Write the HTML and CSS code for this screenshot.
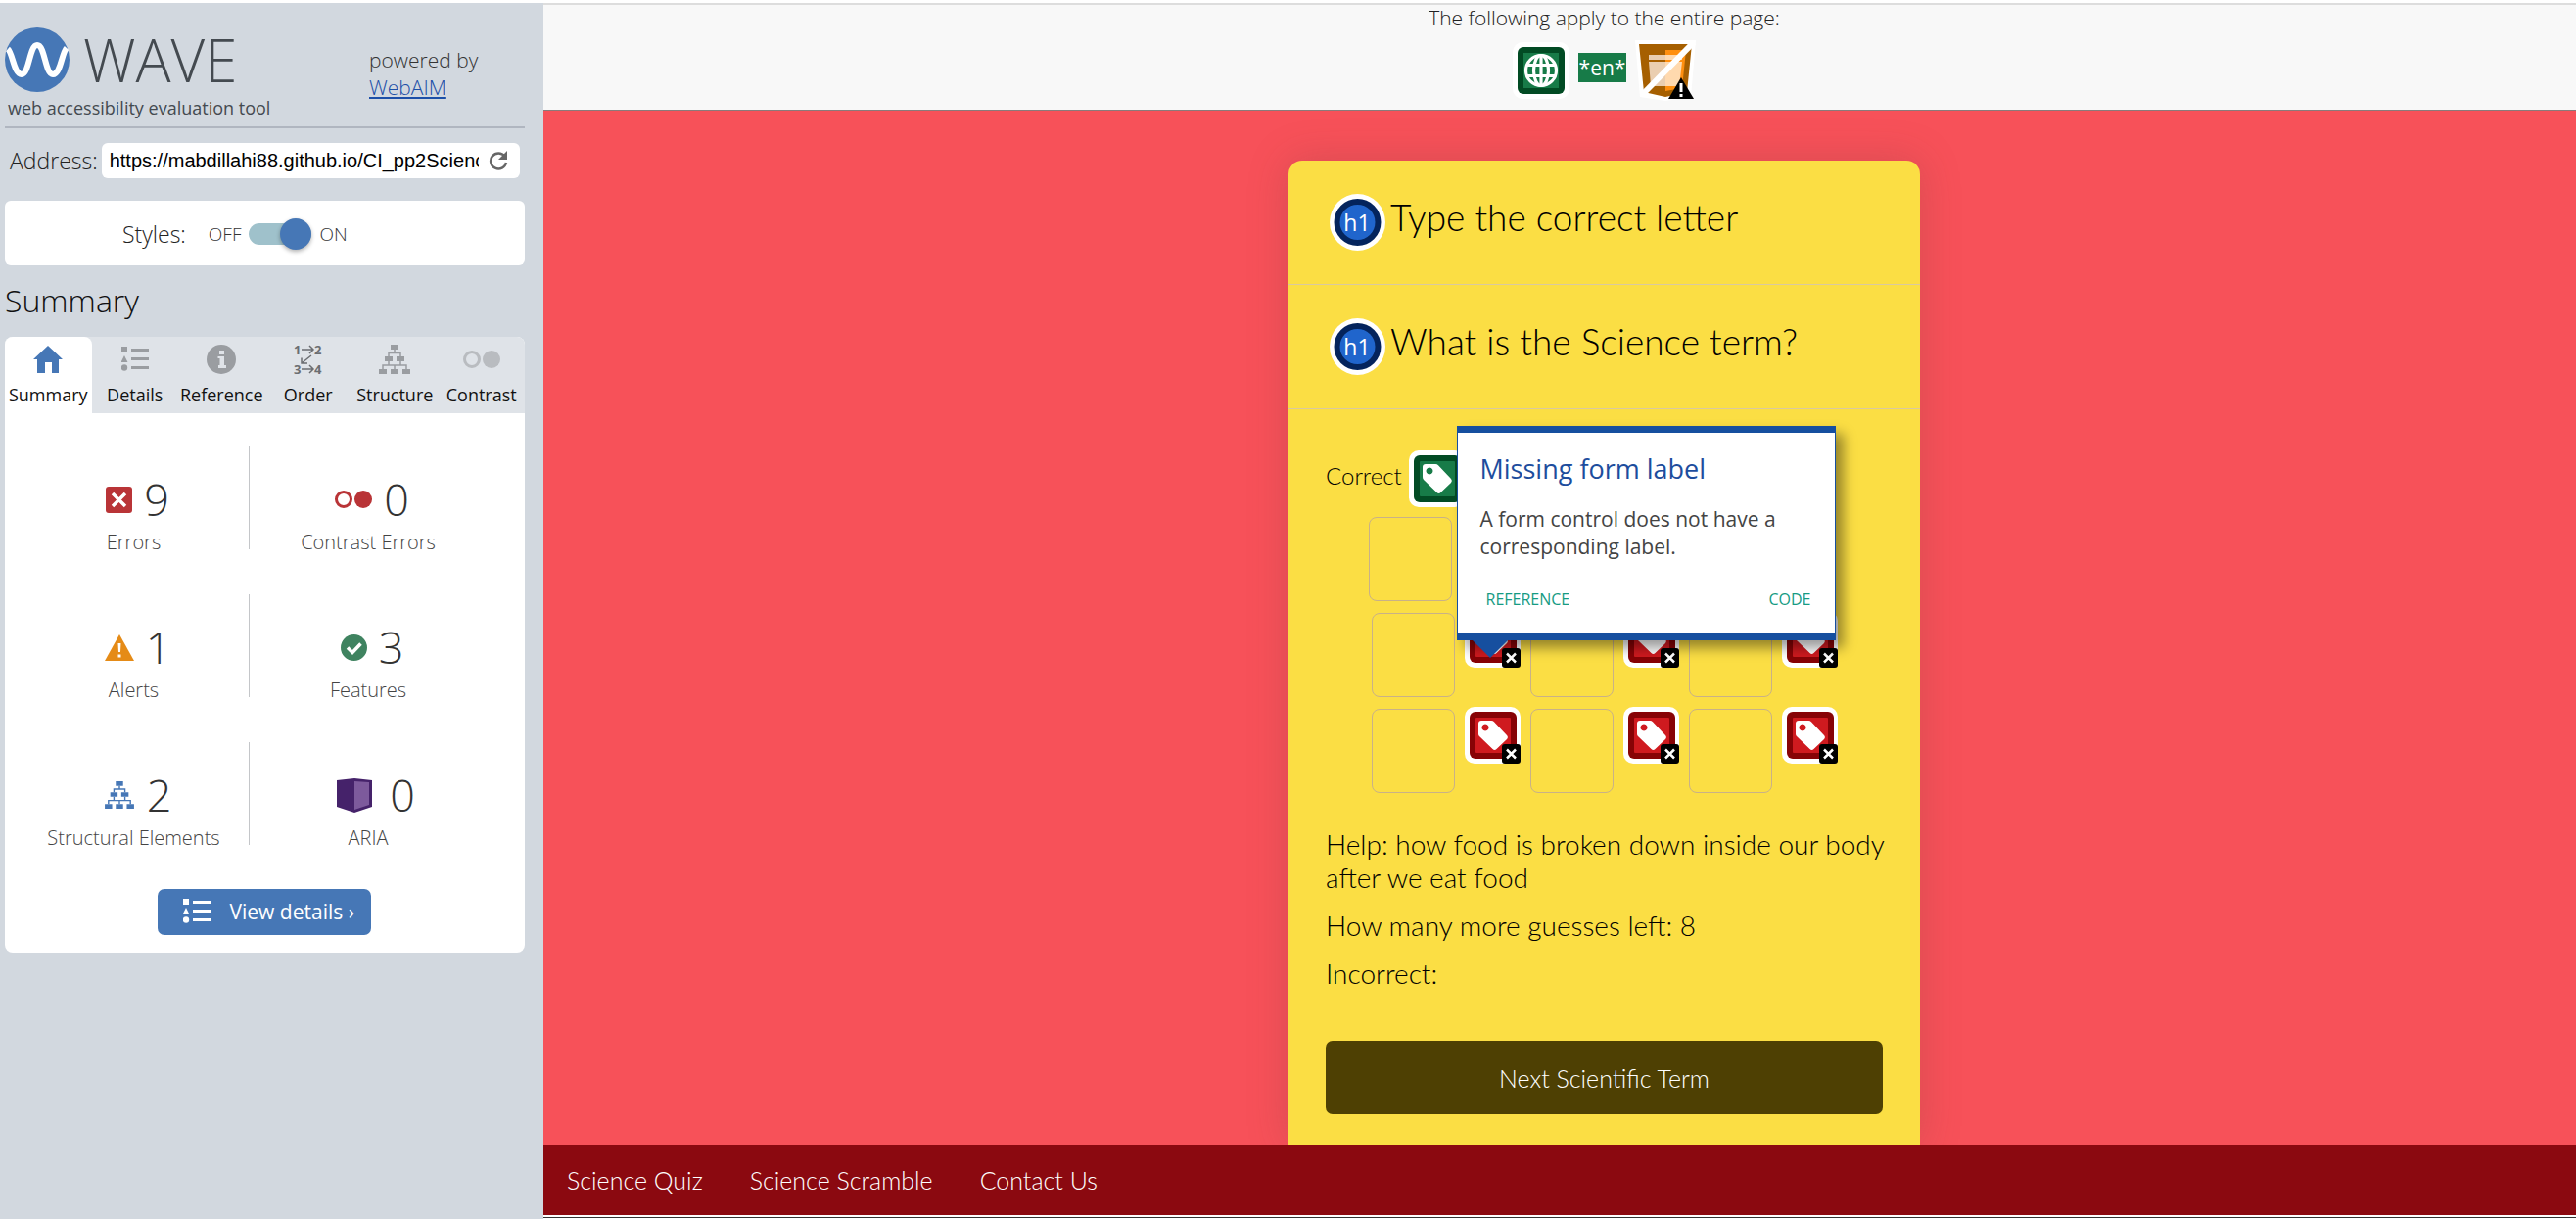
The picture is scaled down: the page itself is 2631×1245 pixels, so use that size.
FILE: index.html
```html
<!DOCTYPE html>
<html lang="en">
<head>
<meta charset="utf-8">
<title>WAVE Web Accessibility Evaluation Tool</title>
<link rel="stylesheet" href="styles.css">
</head>
<body>
<svg class="sprite" aria-hidden="true">
  <symbol id="list" viewBox="0 0 28 26">
    <path d="M0 0h6v6H0zM3 9l3.500 7h-7zM10 2h18v3H10zM10 11h18v3H10zM10 20h18v3H10z"/><circle cx="3" cy="21.500" r="3.200"/>
  </symbol>
  <symbol id="tree" viewBox="0 0 32 30">
    <path d="M12 0h8v5h-8zM6 12h8v5H6zM18 12h8v5h-8zM0 25h8v5H0zM12 25h8v5h-8zM24 25h8v5h-8z"/>
    <path d="M16 5v3.500M10 12V8.500h12V12M10 17v4M22 17v4M4 25v-4h24v4M16 21v4" fill="none" stroke="currentColor" stroke-width="1.500"/>
  </symbol>
  <symbol id="pair" viewBox="0 0 38 20">
    <circle cx="9" cy="10" r="7.500" fill="none" stroke="currentColor" stroke-width="3"/><circle cx="29" cy="10" r="9"/>
  </symbol>
  <symbol id="tag" viewBox="0 0 57 58">
    <rect class="halo" width="57" height="58" rx="10"/>
    <rect class="frame" x="5" y="5" width="48" height="48" rx="6"/>
    <rect class="face" x="11" y="11" width="36" height="36" rx="1"/>
    <path fill="#fff" fill-rule="evenodd" d="M14 17a3 3 0 0 1 3-3h10a4 4 0 0 1 3 1.200L43 29a3 3 0 0 1 0 4L32.500 43a3 3 0 0 1-4 0L15 30a4 4 0 0 1-1-3zM21 17.500a3.500 3.500 0 1 0 .01 0z"/>
  </symbol>
  <symbol id="missing" viewBox="0 0 57 58">
    <use href="#tag"/>
    <rect x="38" y="38" width="19" height="20" rx="3"/>
    <path d="M43 43.500l9 9M52 43.500l-9 9" stroke="#fff" stroke-width="2.500"/>
  </symbol>
  <symbol id="h1" viewBox="0 0 57 58">
    <ellipse cx="28.500" cy="29" rx="28.500" ry="29" fill="#fff"/><circle cx="28.500" cy="29" r="24" fill="#04245c"/><circle cx="28.500" cy="29" r="18" fill="#2065cc"/>
    <text x="28" y="38" text-anchor="middle" font-family="Open Sans" font-size="23" font-weight="400" fill="#fff">h1</text>
  </symbol>
</svg>

<aside class="sidebar">
  <header class="brand">
    <div>
      <div class="logo">
        <svg width="66" height="66" viewBox="0 0 66 66" aria-hidden="true"><circle cx="33" cy="33" r="33" fill="#4677b6"/><path d="M3 22C8 26 9 48 17 48S25 18 33 18s8 30 16 30 9-22 14-27" fill="none" stroke="#fff" stroke-width="6"/></svg>
        <span>WAVE</span>
      </div>
      <p class="tagline">web accessibility evaluation tool</p>
    </div>
    <p class="powered">powered by<br><a href="#">WebAIM</a></p>
  </header>

  <form class="address">
    <label for="url">Address:</label>
    <div class="field">
      <input id="url" type="text" value="https://mabdillahi88.github.io/CI_pp2Science/">
      <button type="button" aria-label="Reload"><svg width="20" height="20" viewBox="0 0 20 20"><path d="M16.500 5.500A8 8 0 1 0 18 12" fill="none" stroke="#666" stroke-width="2.500"/><path d="M19 0v9h-9z" fill="#666"/></svg></button>
    </div>
  </form>

  <div class="styles">
    <span class="styles-name">Styles:</span>
    <label for="toggle">OFF</label>
    <input id="toggle" class="switch" type="checkbox" checked>
    <label for="toggle">ON</label>
  </div>

  <h2>Summary</h2>
  <div class="panel">
    <nav class="tabs">
      <button class="tab active"><svg width="30" height="28" viewBox="0 0 30 28"><path d="M15 0l15 14h-4v14h-7V17h-7v11H4V14H0z"/></svg>Summary</button>
      <button class="tab"><svg width="28" height="26"><use href="#list"/></svg>Details</button>
      <button class="tab"><svg width="30" height="30" viewBox="0 0 30 30"><circle cx="15" cy="15" r="15"/><path fill="#dfe3e8" d="M13 6h5v4h-5zM11.500 12H18v9h2v3h-8v-3h1.500v-7h-2z"/></svg>Reference</button>
      <button class="tab order"><svg width="30" height="30" viewBox="0 0 30 30"><g font-family="Open Sans" font-size="13" font-weight="700"><text x="0" y="10">1</text><text x="21" y="10">2</text><text x="0" y="30">3</text><text x="21" y="30">4</text></g><path d="M8 5h11M16 1l4 4-4 4M8 25h11M16 21l4 4-4 4M18 11L8 19M8 13.500V19h6" fill="none" stroke="currentColor" stroke-width="1.500"/></svg>Order</button>
      <button class="tab"><svg width="32" height="30"><use href="#tree"/></svg>Structure</button>
      <button class="tab faint"><svg width="38" height="20"><use href="#pair"/></svg>Contrast</button>
    </nav>
    <ul class="stats">
      <li><div class="count"><svg class="red" width="27" height="27" viewBox="0 0 27 27"><rect width="27" height="27" rx="3"/><path d="M7 7l13 13M20 7L7 20" stroke="#fff" stroke-width="3.500"/></svg>9</div>Errors</li>
      <li><div class="count"><svg class="red" width="38" height="20"><use href="#pair"/></svg>0</div>Contrast Errors</li>
      <li><div class="count"><svg class="orange" width="30" height="27" viewBox="0 0 30 27"><path d="M15 0l15 27H0z"/><path fill="#fff" d="M13.500 9h3l-.5 9h-2zM13.500 20.500h3v3h-3z"/></svg>1</div>Alerts</li>
      <li><div class="count"><svg class="green" width="27" height="27" viewBox="0 0 27 27"><circle cx="13.500" cy="13.500" r="13.500"/><path d="M7 13.500l5 5 8.500-9" fill="none" stroke="#fff" stroke-width="3.500"/></svg>3</div>Features</li>
      <li><div class="count"><svg class="blue" width="32" height="28" viewBox="0 0 32 30"><use href="#tree"/></svg>2</div>Structural Elements</li>
      <li><div class="count wide"><svg width="36" height="35" viewBox="0 0 36 35"><path fill="#45226a" d="M0 2l18-2 18 2v27l-18 6-18-6z"/><path fill="#7d5a9c" d="M18 3l15 1v23l-15 5z"/></svg>0</div>ARIA</li>
    </ul>
    <button class="details"><svg width="28" height="26"><use href="#list"/></svg>View details ›</button>
  </div>
</aside>

<main class="page">
  <section class="notice">
    <p>The following apply to the entire page:</p>
    <div class="notice-icons">
      <svg width="58" height="58" viewBox="0 0 58 58" role="img" aria-label="Language"><rect width="58" height="58" rx="10" fill="#fff"/><rect x="5" y="5" width="48" height="48" rx="6" fill="#024b24"/><path fill="#177b48" d="M11 11h36v36H11z"/><g fill="none" stroke="#fff" stroke-width="3.200"><circle cx="29" cy="29" r="15.500"/><ellipse cx="29" cy="29" rx="7.500" ry="15.500"/><path d="M29 13v32M14 23.500h30M14 34.500h30"/></g></svg>
      <span class="lang">*en*</span>
      <svg width="62" height="62" viewBox="0 0 62 62" role="img" aria-label="Noscript"><path fill="#fff" d="M0 0h62l-5 58-26 4-26-4z"/><path fill="#a65f00" d="M4 4h54l-5 49-22 5-22-5z"/><path fill="#ff8f0f" d="M31 10h21l-4 39-17 3z"/><path fill="#eaceb0" d="M14 15h17v5H14zM14 22h17v25H16z"/><path fill="#ffd9ae" d="M31 15h17v5H31zM31 22h17l-3 25H31z"/><path d="M60 2L8 55" stroke="#fff" stroke-width="6"/><path fill="#000" d="M47 38l13 22H34z"/><path fill="#fff" d="M45.500 44h3v9h-3zM45.500 55h3v3h-3z"/></svg>
    </div>
  </section>

  <div class="game">
    <article class="card">
      <header class="card-head"><svg width="57" height="58" aria-hidden="true"><use href="#h1"/></svg><h1>Type the correct letter</h1></header>
      <header class="card-head"><svg width="57" height="58" aria-hidden="true"><use href="#h1"/></svg><h1>What is the Science term?</h1></header>
      <div class="card-body">
        <div class="correct"><span>Correct</span><svg class="ok" width="57" height="58"><use href="#tag"/></svg></div>
        <div class="letters">
          <div class="row first">
            <input type="text" aria-label="Letter 1"><svg class="bad" width="57" height="58"><use href="#missing"/></svg>
            <input type="text" aria-label="Letter 2"><svg class="bad" width="57" height="58"><use href="#missing"/></svg>
            <input type="text" aria-label="Letter 3"><svg class="bad" width="57" height="58"><use href="#missing"/></svg>
          </div>
          <div class="row">
            <input type="text" aria-label="Letter 4">
            <div class="anchor">
              <svg class="bad" width="57" height="58"><use href="#missing"/></svg>
              <div class="tip" role="tooltip">
                <h3>Missing form label</h3>
                <p>A form control does not have a corresponding label.</p>
                <div class="tip-links"><a href="#">REFERENCE</a><a href="#">CODE</a></div>
              </div>
            </div>
            <input type="text" aria-label="Letter 5"><svg class="bad" width="57" height="58"><use href="#missing"/></svg>
            <input type="text" aria-label="Letter 6"><svg class="bad" width="57" height="58"><use href="#missing"/></svg>
          </div>
          <div class="row">
            <input type="text" aria-label="Letter 7"><svg class="bad" width="57" height="58"><use href="#missing"/></svg>
            <input type="text" aria-label="Letter 8"><svg class="bad" width="57" height="58"><use href="#missing"/></svg>
            <input type="text" aria-label="Letter 9"><svg class="bad" width="57" height="58"><use href="#missing"/></svg>
          </div>
        </div>
        <div class="clues">
          <p>Help: how food is broken down inside our body after we eat food</p>
          <p>How many more guesses left: 8</p>
          <p>Incorrect:</p>
        </div>
        <button class="next">Next Scientific Term</button>
      </div>
    </article>
  </div>

  <nav class="footer">
    <a href="#">Science Quiz</a>
    <a href="#">Science Scramble</a>
    <a href="#">Contact Us</a>
  </nav>
</main>
</body>
</html>
```
FILE: styles.css
```css
* { box-sizing: border-box; }
body {
  margin: 0;
  min-height: 100vh;
  padding-top: 3px;
  display: grid;
  grid-template-columns: 555px 1fr;
  font-family: "Open Sans", sans-serif;
  font-weight: 300;
  color: #222;
  background: #fff;
}
p, h1, h2, h3, ul { margin: 0; padding: 0; font-weight: 300; }
button, input { font: inherit; color: inherit; border: 0; margin: 0; }
svg { flex: none; fill: currentColor; }
.sprite { position: absolute; width: 0; height: 0; }

/* sidebar */
.sidebar { background: #d2d8df; padding: 24px 19px 0 5px; }
.brand { display: flex; border-bottom: 2px solid #b0b6c0; height: 104px; }
.brand > div { width: 372px; }
.logo { display: flex; align-items: center; gap: 14px; height: 68px; font-size: 60px; line-height: 68px; color: #444a50; }
.tagline { font-size: 18px; line-height: 30px; font-weight: 400; color: #444a50; padding-left: 3px; }
.powered { font-size: 21px; line-height: 28px; padding-top: 20px; color: #333; }
.powered a { color: #1c4fa8; }
.address { display: flex; align-items: center; gap: 4px; padding: 15px 5px 0; font-size: 23px; line-height: 36px; }
.field { flex: 1; display: flex; align-items: center; gap: 10px; height: 36px; padding: 0 12px 0 8px; background: #fff; border-radius: 6px; }
.field input { flex: 1; min-width: 0; padding: 0; font: 400 20px/36px "Liberation Sans", sans-serif; color: #000; background: none; outline: 0; }
.field button { padding: 0; background: none; display: flex; }
.styles { display: flex; align-items: center; gap: 8px; height: 66px; margin-top: 23px; padding: 2px 0 0 120px; background: #fff; border-radius: 6px; font-size: 19px; color: #333; }
.styles-name { font-size: 23px; margin-right: 15px; color: #222; }
.switch { appearance: none; display: flex; align-items: center; justify-content: flex-end; width: 64px; height: 22px; border-radius: 11px; background: #9fc1cb; }
.switch::before { content: ""; width: 32px; height: 32px; flex: none; border-radius: 50%; background: #4677b6; box-shadow: 0 2px 4px rgba(0, 0, 0, .3); }
.sidebar h2 { font-size: 32px; line-height: 44px; margin: 14px 0 15px; color: #111; }
.panel { background: #fff; border-radius: 8px; padding-bottom: 18px; display: flex; flex-direction: column; }
.tabs { display: grid; grid-template-columns: repeat(6, 1fr); height: 78px; background: #dfe3e8; border-radius: 8px 8px 0 0; }
.tab { display: flex; flex-direction: column; align-items: center; gap: 5px; padding: 4px 0 0; background: none; font-size: 18px; line-height: 24px; font-weight: 400; color: #111; white-space: nowrap; }
.tab svg { margin: auto 0; color: #9a9da1; }
.tab { justify-content: space-between; padding-bottom: 7px; }
.tab.active { background: #fff; border-radius: 8px 8px 0 0; }
.tab.active svg { color: #4677b6; }
.tab.order svg { color: #6b6e72; }
.tab.faint svg { color: #b9bcc0; }
.stats { list-style: none; display: grid; grid-template-columns: 236px 236px; column-gap: 3px; row-gap: 46px; padding: 34px 0 0 14px; }
.stats li { text-align: center; font-size: 20px; line-height: 28px; height: 105px; padding-top: 24px; color: #444; }
.stats li:nth-child(odd) { border-right: 1px solid #c4c6c9; }
.count { display: flex; align-items: center; justify-content: center; gap: 12px; padding-left: 8px; font-size: 45px; line-height: 60px; color: #333; }
.count.wide { gap: 18px; padding-left: 16px; }
.red { color: #b93437; }
.orange { color: #e58b17; }
.green { color: #3f8360; }
.blue { color: #4677b6; }
.details { align-self: center; display: flex; align-items: center; gap: 20px; width: 218px; height: 47px; margin: 45px 2px 0 0; padding: 0 0 2px 26px; border-radius: 7px; background: #4677b6; color: #fff; font-size: 21px; font-weight: 400; white-space: nowrap; }

/* evaluated page */
.page { display: flex; flex-direction: column; background: #f75159; min-width: 0; }
.page::after { content: ""; height: 4px; background: #fff; border-top: 2px solid #fff; box-shadow: inset 0 1px #333; }
.notice { display: flex; flex-direction: column; align-items: center; height: 110px; padding-left: 91px; background: #f8f8f8; border-top: 2px solid #ddd; border-bottom: 1px solid #8a7a7a; font-size: 21px; line-height: 27px; }
.notice-icons { display: flex; align-items: center; gap: 9px; padding-top: 9px; }
.lang { padding: 0 1px; font-size: 21px; font-weight: 400; line-height: 30px; margin-bottom: 6px; color: #fff; background: #177b48; }
.game { flex: 1; display: flex; justify-content: center; padding: 51px 0 0 91px; }
.card { width: 645px; background: #fbde44; border-radius: 14px 14px 0 0; box-shadow: 0 0 40px rgba(120, 60, 60, .25); color: #000; font-family: Lato, sans-serif; }
.card-head { display: flex; align-items: center; gap: 5px; height: 127px; padding-left: 42px; border-bottom: 1px solid #d9c9a0; }
.card-head h1 { font-size: 37px; line-height: 44px; padding-bottom: 10px; }
.card-body { padding: 42px 38px 31px; }
.correct { display: flex; gap: 7px; height: 58px; font-size: 24px; line-height: 52px; }
.halo { fill: #fff; }
.ok { --frame: #024b24; --face: #177b48; }
.bad { --frame: #870306; --face: #cf1a1f; }
.frame { fill: var(--frame); }
.face { fill: var(--face); }
.bad, .ok { color: #000; }
.letters { display: flex; flex-direction: column; align-items: center; gap: 10px; padding-top: 8px; }
.row { display: flex; align-items: flex-start; gap: 10px; height: 88px; }
.row.first { padding-right: 6px; }
.row input { width: 85px; height: 86px; margin-top: 2px; text-align: center; background: none; border: 1px solid #c9b187; border-radius: 8px; }
.anchor { position: relative; height: 58px; }
.tip { position: absolute; z-index: 2; left: -8px; bottom: 28px; width: 387px; height: 219px; padding: 20px 24px 0 23px; background: #fff; border: 1px solid #164f9f; border-width: 7px 1px; box-shadow: 8px 8px 12px rgba(0, 0, 0, .4); font-family: "Open Sans", sans-serif; font-weight: 400; }
.tip::after { content: ""; position: absolute; left: 14px; top: 100%; border: 19px solid transparent; border-top-color: #164f9f; border-bottom: 0; margin-top: 6px; }
.tip h3 { font-size: 27px; line-height: 34px; font-weight: 400; color: #1d4d9d; }
.tip p { font-size: 21px; line-height: 28px; font-weight: 400; margin-top: 20px; color: #444; }
.tip-links { display: flex; justify-content: space-between; margin-top: 28px; padding-left: 6px; font-size: 16px; line-height: 24px; }
.tip a { color: #169b83; text-decoration: none; }
.clues { display: flex; flex-direction: column; gap: 15px; margin-right: -12px; padding-top: 35px; font-size: 28px; line-height: 34px; }
.next { display: block; width: 100%; height: 75px; margin-top: 52px; border-radius: 7px; background: #4e4003; color: #fff; font-size: 25px; }
.footer { display: flex; align-items: center; gap: 48px; height: 72px; padding-left: 24px; background: #8b0910; font: 300 25px/30px Lato, sans-serif; }
.footer a { color: #fff; text-decoration: none; }
```
